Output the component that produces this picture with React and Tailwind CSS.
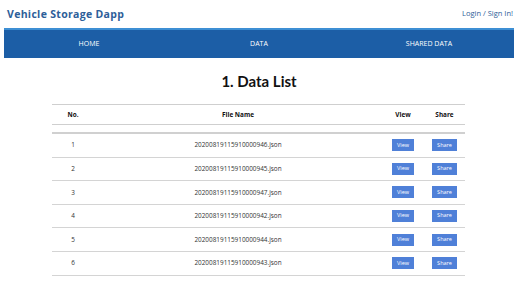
const files = [
  "20200819115910000946.json",
  "20200819115910000945.json",
  "20200819115910000947.json",
  "20200819115910000942.json",
  "20200819115910000944.json",
  "20200819115910000943.json",
];

const cols = "grid grid-cols-[42px_288px_42px_41px] items-center";

export default function App() {
  return (
    <div className="w-[525px] h-[292px] bg-white font-['Open_Sans',sans-serif] overflow-hidden">
      {/* Top bar */}
      <div className="flex items-center justify-between h-[28px] pl-[7px] pr-[12px]">
        <h1 className="text-[10.5px] font-bold tracking-[0.03em] text-[#2d5e99] leading-none">
          Vehicle Storage Dapp
        </h1>
        <a className="text-[7.5px] text-[#2d5e99] leading-none">Login / Sign In!</a>
      </div>

      {/* Nav */}
      <nav className="ml-[4px] w-[510px] h-[30px] bg-[#1c5ea6] border-t-[2px] border-[#3d8fd4] grid grid-cols-3 items-center text-[7px] text-white">
        <span className="text-center">HOME</span>
        <span className="text-center">DATA</span>
        <span className="text-center">SHARED DATA</span>
      </nav>

      {/* Title */}
      <h2 className="text-center text-[15px] font-bold font-['Lato',sans-serif] text-[#111] leading-none mt-[16px] ml-[4px] w-[510px]">
        1. Data List
      </h2>

      {/* Table */}
      <div className="ml-[52px] w-[413px] mt-[15px] text-[6.4px] text-[#333]">
        <div className={`${cols} h-[21px] border-t-[1.5px] border-b-[1.5px] border-[#cfcfcf] font-bold text-[#111]`}>
          <span className="text-center">No.</span>
          <span className="text-center">File Name</span>
          <span className="text-center">View</span>
          <span className="text-center">Share</span>
        </div>
        <div className="h-[9px] border-b-[2px] border-[#d0d0d0]" />
        {files.map((f, i) => (
          <div key={f} className={`${cols} h-[23.6px] border-b-[1.5px] border-[#d4d4d4]`}>
            <span className="text-center">{i + 1}</span>
            <span className="text-center">{f}</span>
            <span className="flex justify-center">
              <button className="w-[22px] h-[12px] bg-[#4f80d8] text-white text-[5.5px] leading-none">View</button>
            </span>
            <span className="flex justify-center">
              <button className="w-[25px] h-[12px] bg-[#4f80d8] text-white text-[5.5px] leading-none">Share</button>
            </span>
          </div>
        ))}
      </div>
    </div>
  );
}
